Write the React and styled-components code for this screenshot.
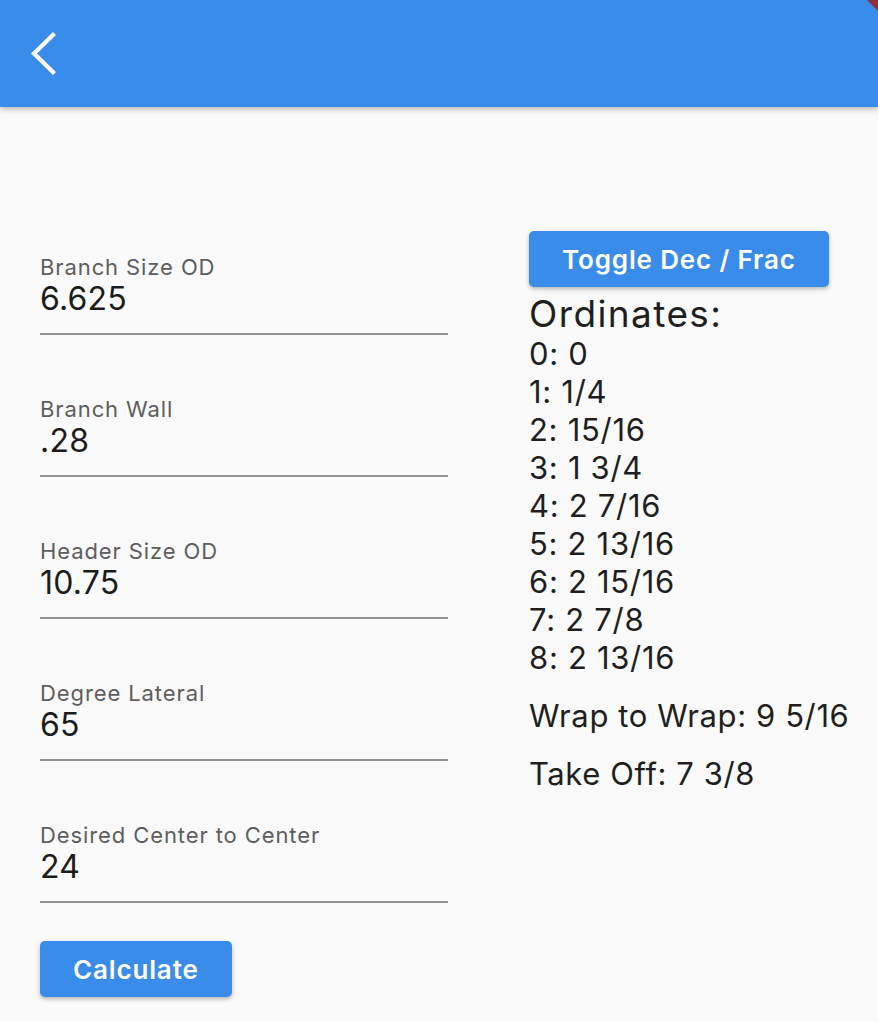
import styled, { createGlobalStyle } from 'styled-components';

const GlobalStyle = createGlobalStyle`
  html, body {
    margin: 0;
    padding: 0;
    background: #fafafa;
  }
  body {
    font-family: Inter, 'Noto Sans', 'Liberation Sans', sans-serif;
    color: #1f1f1f;
  }
`;

const fields = [
  { label: 'Branch Size OD', value: '6.625' },
  { label: 'Branch Wall', value: '.28' },
  { label: 'Header Size OD', value: '10.75' },
  { label: 'Degree Lateral', value: '65' },
  { label: 'Desired Center to Center', value: '24' },
];

const ordinates = ['0', '1/4', '15/16', '1 3/4', '2 7/16', '2 13/16', '2 15/16', '2 7/8', '2 13/16'];

function App() {
  return (
    <>
      <GlobalStyle />
      <Page>
        <AppBar>
          <BackButton aria-label='back'>
            <svg width='28' height='44' viewBox='0 0 28 44'>
              <polyline
                points='23,3 4,21.5 23,40'
                fill='none'
                stroke='#fff'
                strokeWidth='4.2'
                strokeLinecap='square'
              />
            </svg>
          </BackButton>
        </AppBar>
        <Banner viewBox='0 0 12 12' width='12' height='12'>
          <polygon points='1,0 12,0 12,11' fill='#8a2f3b' />
        </Banner>
        <Body>
          <Form>
            {fields.map((f) => (
              <Field key={f.label}>
                <Label>{f.label}</Label>
                <Value>{f.value}</Value>
              </Field>
            ))}
            <Button>Calculate</Button>
          </Form>
          <Results>
            <Button>Toggle Dec / Frac</Button>
            <Heading>Ordinates:</Heading>
            <List>
              {ordinates.map((o, i) => (
                <Row key={i}>{`${i}: ${o}`}</Row>
              ))}
            </List>
            <Summary>Wrap to Wrap: 9 5/16</Summary>
            <Summary>Take Off: 7 3/8</Summary>
          </Results>
        </Body>
      </Page>
    </>
  );
}

export default App;

const Page = styled.div`
  position: relative;
  width: 878px;
  min-height: 1022px;
  background: #fafafa;
  overflow: hidden;
`;

const AppBar = styled.header`
  height: 107px;
  background: #3a8ceb;
  display: flex;
  align-items: center;
  padding-left: 30px;
  box-shadow: 0 2px 6px rgba(0, 0, 0, 0.3);
  position: relative;
  z-index: 1;
`;

const BackButton = styled.div`
  display: flex;
  align-items: center;
  margin-top: 1px;
`;

const Banner = styled.svg`
  position: absolute;
  top: 0;
  right: 0;
  z-index: 2;
`;

const Body = styled.main`
  display: flex;
  padding: 124px 0 0 40px;
`;

const Form = styled.section`
  width: 408px;
  display: flex;
  flex-direction: column;
  align-items: flex-start;
  padding-top: 24px;
`;

const Field = styled.div`
  width: 100%;
  padding-bottom: 14px;
  border-bottom: 2px solid #919191;
  margin-bottom: 62px;
  &:last-of-type {
    margin-bottom: 38px;
  }
`;

const Label = styled.div`
  font-size: 22px;
  line-height: 24px;
  letter-spacing: 0.9px;
  color: #5e5e5e;
`;

const Value = styled.div`
  font-size: 32px;
  line-height: 40px;
  letter-spacing: 0.2px;
  color: #1c1c1c;
`;

const Button = styled.button`
  height: 56px;
  padding: 0 33px;
  border: none;
  border-radius: 5px;
  background: #3a8ceb;
  color: #fff;
  font-family: Inter, 'Noto Sans', sans-serif;
  font-size: 26px;
  font-weight: 600;
  letter-spacing: 0.85px;
  box-shadow: 0 2px 4px rgba(0, 0, 0, 0.28);
  cursor: pointer;
`;

const Results = styled.section`
  margin-left: 81px;
  display: flex;
  flex-direction: column;
  align-items: flex-start;
`;

const Heading = styled.h2`
  margin: 5px 0 0;
  font-size: 37px;
  font-weight: 400;
  line-height: 43px;
  letter-spacing: 1.4px;
`;

const List = styled.div`
  display: flex;
  flex-direction: column;
`;

const Row = styled.div`
  font-size: 31px;
  line-height: 38px;
  letter-spacing: 0.7px;
`;

const Summary = styled.p`
  margin: 20px 0 0;
  font-size: 31px;
  line-height: 38px;
  letter-spacing: 0.6px;
`;
